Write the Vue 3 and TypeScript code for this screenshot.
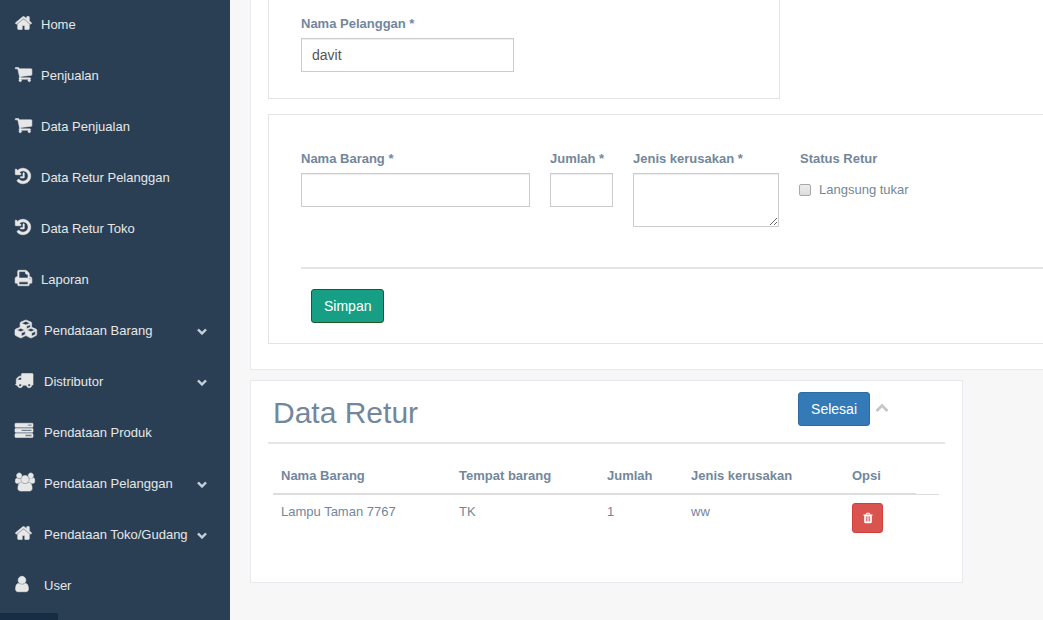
<script setup lang="ts">
import { ref } from 'vue'

interface Icon {
  box: string
  width: number
  path: string
  flip?: boolean
}

interface MenuItem {
  label: string
  icon: string
  spaced?: boolean
  expandable?: boolean
}

interface ReturnRow {
  name: string
  place: string
  amount: number
  damage: string
}

const icons: Record<string, Icon> = {
  home: {
    box: '64 0 1664 1792',
    width: 17,
    path: 'M1472 992v480q0 26-19 45t-45 19h-384v-384h-256v384h-384q-26 0-45-19t-19-45v-480q0-1 .5-3t.5-3l575-474 575 474q1 2 1 6zm223-69l-62 74q-8 9-21 11h-3q-13 0-21-7l-692-577-692 577q-12 8-24 7-13-2-21-11l-62-74q-8-10-7-23.5t11-21.5l719-599q32-26 76-26t76 26l244 204v-195q0-14 9-23t23-9h192q14 0 23 9t9 23v408l219 182q10 8 11 21.5t-7 23.5z',
  },
  cart: {
    box: '64 0 1664 1792',
    width: 17,
    path: 'M704 1536q0 52-38 90t-90 38-90-38-38-90 38-90 90-38 90 38 38 90zm896 0q0 52-38 90t-90 38-90-38-38-90 38-90 90-38 90 38 38 90zm128-1088v512q0 24-16.5 42.5t-40.5 21.5l-1044 122q13 60 13 70 0 16-24 64h920q26 0 45 19t19 45-19 45-45 19h-1024q-26 0-45-19t-19-45q0-11 8-31.5t16-36 21.5-40 15.5-29.5l-177-823h-204q-26 0-45-19t-19-45 19-45 45-19h256q16 0 28.5 6.5t19.5 15.5 13 24.5 8 26 5.5 29.5 4.5 26h1201q26 0 45 19t19 45z',
  },
  history: {
    box: '128 0 1536 1792',
    width: 16,
    path: 'M1664 896q0 156-61 298t-164 245-245 164-298 61q-172 0-327-72.5t-264-204.5q-7-10-6.5-22.5t8.5-20.5l137-138q10-9 25-9 16 2 23 12 73 95 179 147t225 52q104 0 198.5-40.5t163.5-109.5 109.5-163.5 40.5-198.5-40.5-198.5-109.5-163.5-163.5-109.5-198.5-40.5q-98 0-188 35.5t-160 101.5l137 138q31 30 14 69-17 40-59 40h-448q-26 0-45-19t-19-45v-448q0-42 40-59 39-17 69 14l130 129q107-101 244.5-156.5t284.5-55.5q156 0 298 61t245 164 164 245 61 298zm-640-288v448q0 14-9 23t-23 9h-320q-14 0-23-9t-9-23v-64q0-14 9-23t23-9h224v-352q0-14 9-23t23-9h64q14 0 23 9t9 23z',
  },
  print: {
    box: '64 0 1664 1792',
    width: 17,
    path: 'M448 1536h896v-256h-896v256zm0-640h896v-384h-160q-40 0-68-28t-28-68v-160h-640v640zm1152 64q0-26-19-45t-45-19-45 19-19 45 19 45 45 19 45-19 19-45zm128 0v416q0 13-9.5 22.5t-22.5 9.5h-224v160q0 40-28 68t-68 28h-960q-40 0-68-28t-28-68v-160h-224q-13 0-22.5-9.5t-9.5-22.5v-416q0-79 56.5-135.5t135.5-56.5h64v-544q0-40 28-68t68-28h672q40 0 88 20t76 48l152 152q28 28 48 76t20 88v256h64q79 0 135.5 56.5t56.5 135.5z',
  },
  cubes: {
    box: '0 0 2304 1792',
    width: 23,
    flip: true,
    path: 'M640 -96l384 192v314l-384 -164v-342zM576 358l404 173l-404 173l-404 -173zM1664 -96l384 192v314l-384 -164v-342zM1600 358l404 173l-404 173l-404 -173zM1152 651l384 165v266l-384 -164v-267zM1088 1030l441 189l-441 189l-441 -189zM2176 512v-416q0 -36 -19 -67t-52 -47l-448 -224q-25 -14 -57 -14t-57 14l-448 224q-4 2 -7 4q-2 -2 -7 -4l-448 -224q-25 -14 -57 -14t-57 14l-448 224q-33 16 -52 47t-19 67v416q0 38 21.5 70t56.5 48l434 186v400q0 38 21.5 70t56.5 48l448 192q23 10 50 10t50 -10l448 -192q35 -16 56.5 -48t21.5 -70v-400l434 -186q36 -16 57 -48t21 -70z',
  },
  truck: {
    box: '0 0 1792 1792',
    width: 18,
    path: 'M640 1408q0-52-38-90t-90-38-90 38-38 90 38 90 90 38 90-38 38-90zm-384-512h384v-256h-158q-13 0-22 9l-195 195q-9 9-9 22v30zm1280 512q0-52-38-90t-90-38-90 38-38 90 38 90 90 38 90-38 38-90zm256-1088v1024q0 15-4 26.5t-13.5 18.5-16.5 11.5-23.5 6-22.5 2-25.5 0-22.5-.5q0 106-75 181t-181 75-181-75-75-181h-384q0 106-75 181t-181 75-181-75-75-181h-64q-3 0-22.5.5t-25.5 0-22.5-2-23.5-6-16.5-11.5-13.5-18.5-4-26.5q0-26 19-45t45-19v-320q0-8-.5-35t0-38 2.5-34.5 6.5-37 14-30.5 22.5-30l198-198q19-19 50.5-32t58.5-13h160v-192q0-26 19-45t45-19h1024q26 0 45 19t19 45z',
  },
  tasks: {
    box: '0 0 1792 1792',
    width: 18,
    path: 'M1024 1408h640v-128h-640v128zm-384-512h1024v-128h-1024v128zm640-512h384v-128h-384v128zm512 832v256q0 26-19 45t-45 19h-1664q-26 0-45-19t-19-45v-256q0-26 19-45t45-19h1664q26 0 45 19t19 45zm0-512v256q0 26-19 45t-45 19h-1664q-26 0-45-19t-19-45v-256q0-26 19-45t45-19h1664q26 0 45 19t19 45zm0-512v256q0 26-19 45t-45 19h-1664q-26 0-45-19t-19-45v-256q0-26 19-45t45-19h1664q26 0 45 19t19 45z',
  },
  users: {
    box: '0 0 1920 1792',
    width: 20,
    flip: true,
    path: 'M593 640q-162 -5 -265 -128h-134q-82 0 -138 40.5t-56 118.5q0 353 124 353q6 0 43.5 -21t97.5 -42.5t119 -21.5q67 0 133 23q-5 -37 -5 -66q0 -159 93 -293zM1664 3q0 -120 -73 -189.5t-194 -69.5h-874q-121 0 -194 69.5t-73 189.5q0 53 3.5 103.5t14 109t26.5 108.5t43 97.5t62 81t85.5 53.5t111.5 20q10 0 43 -21.5t73 -48t107 -48t135 -21.5t135 21.5t107 48t73 48t43 21.5q61 0 111.5 -20t85.5 -53.5t62 -81t43 -97.5t26.5 -108.5t14 -109t3.5 -103.5zM640 1280q0 -106 -75 -181t-181 -75t-181 75t-75 181t75 181t181 75t181 -75t75 -181zM1344 896q0 -159 -112.5 -271.5t-271.5 -112.5t-271.5 112.5t-112.5 271.5t112.5 271.5t271.5 112.5t271.5 -112.5t112.5 -271.5zM1920 671q0 -78 -56 -118.5t-138 -40.5h-134q-103 123 -265 128q93 134 93 293q0 29 -5 66q66 -23 133 -23q59 0 119 21.5t97.5 42.5t43.5 21q124 0 124 -353zM1792 1280q0 -106 -75 -181t-181 -75t-181 75t-75 181t75 181t181 75t181 -75t75 -181z',
  },
  user: {
    box: '256 0 1280 1792',
    width: 14,
    path: 'M1536 1399q0 109-62.5 187t-150.5 78h-854q-88 0-150.5-78t-62.5-187q0-85 8.5-160.5t31.5-152 58.5-131 94-89 134.5-34.5q131 128 313 128t313-128q76 0 134.5 34.5t94 89 58.5 131 31.5 152 8.5 160.5zm-256-887q0 159-112.5 271.5t-271.5 112.5-271.5-112.5-112.5-271.5 112.5-271.5 271.5-112.5 271.5 112.5 112.5 271.5z',
  },
}

const menu: MenuItem[] = [
  { label: 'Home', icon: 'home' },
  { label: 'Penjualan', icon: 'cart' },
  { label: 'Data Penjualan', icon: 'cart' },
  { label: 'Data Retur Pelanggan', icon: 'history' },
  { label: 'Data Retur Toko', icon: 'history' },
  { label: 'Laporan', icon: 'print' },
  { label: 'Pendataan Barang', icon: 'cubes', spaced: true, expandable: true },
  { label: 'Distributor', icon: 'truck', spaced: true, expandable: true },
  { label: 'Pendataan Produk', icon: 'tasks', spaced: true },
  { label: 'Pendataan Pelanggan', icon: 'users', spaced: true, expandable: true },
  { label: 'Pendataan Toko/Gudang', icon: 'home', spaced: true, expandable: true },
  { label: 'User', icon: 'user', spaced: true },
]

const customer = ref('davit')
const item = ref('')
const amount = ref('')
const damage = ref('')
const swapNow = ref(false)
const rows = ref<ReturnRow[]>([{ name: 'Lampu Taman 7767', place: 'TK', amount: 1, damage: 'ww' }])

function removeRow(index: number) {
  rows.value.splice(index, 1)
}
</script>

<template>
  <div class="layout">
    <aside class="sidebar">
      <nav class="menu">
        <a v-for="entry in menu" :key="entry.label" href="#" class="menu-item" :class="{ spaced: entry.spaced }">
          <span class="menu-icon">
            <svg :viewBox="icons[entry.icon].box" :width="icons[entry.icon].width" height="18" aria-hidden="true">
              <path :d="icons[entry.icon].path" :transform="icons[entry.icon].flip ? 'matrix(1 0 0 -1 0 1536)' : undefined" />
            </svg>
          </span>
          <span class="menu-label">{{ entry.label }}</span>
          <svg v-if="entry.expandable" class="menu-arrow" viewBox="0 0 1792 1792" aria-hidden="true">
            <path d="M1683 808l-742 741q-19 19-45 19t-45-19l-742-741q-19-19-19-45.5t19-45.5l166-165q19-19 45-19t45 19l531 531 531-531q19-19 45-19t45 19l166 165q19 19 19 45.5t-19 45.5z" />
          </svg>
        </a>
      </nav>
      <div class="sidebar-footer"></div>
    </aside>

    <main class="content">
      <section class="panel form-panel">
        <div class="box customer-box">
          <div class="field customer-field">
            <label for="customer">Nama Pelanggan *</label>
            <input id="customer" v-model="customer" type="text" class="control" />
          </div>
        </div>

        <form class="box item-box" @submit.prevent>
          <div class="fields">
            <div class="field item-field">
              <label for="item">Nama Barang *</label>
              <input id="item" v-model="item" type="text" class="control" />
            </div>
            <div class="field amount-field">
              <label for="amount">Jumlah *</label>
              <input id="amount" v-model="amount" type="text" class="control" />
            </div>
            <div class="field damage-field">
              <label for="damage">Jenis kerusakan *</label>
              <textarea id="damage" v-model="damage" class="control area"></textarea>
            </div>
            <fieldset class="field status-field">
              <legend>Status Retur</legend>
              <label class="check" for="swap">
                <input id="swap" v-model="swapNow" type="checkbox" />
                Langsung tukar
              </label>
            </fieldset>
          </div>
          <hr class="rule" />
          <button type="submit" class="btn btn-save">Simpan</button>
        </form>
      </section>

      <section class="panel list-panel">
        <header class="list-head">
          <h2>Data Retur</h2>
          <button type="button" class="btn btn-done">Selesai</button>
          <button type="button" class="collapse" aria-label="Ciutkan">
            <svg viewBox="0 0 1792 1792" width="14" height="14" aria-hidden="true">
              <path d="M1683 1331l-166 165q-19 19-45 19t-45-19l-531-531-531 531q-19 19-45 19t-45-19l-166-165q-19-19-19-45.5t19-45.5l742-741q19-19 45-19t45 19l742 741q19 19 19 45.5t-19 45.5z" />
            </svg>
          </button>
        </header>
        <table>
          <colgroup>
            <col class="col-name" />
            <col class="col-place" />
            <col class="col-amount" />
            <col class="col-damage" />
            <col class="col-action" />
            <col />
          </colgroup>
          <thead>
            <tr>
              <th scope="col">Nama Barang</th>
              <th scope="col">Tempat barang</th>
              <th scope="col">Jumlah</th>
              <th scope="col">Jenis kerusakan</th>
              <th scope="col">Opsi</th>
            </tr>
          </thead>
          <tbody>
            <tr v-for="(row, index) in rows" :key="row.name">
              <td>{{ row.name }}</td>
              <td>{{ row.place }}</td>
              <td>{{ row.amount }}</td>
              <td>{{ row.damage }}</td>
              <td>
                <button type="button" class="btn-delete" aria-label="Hapus" @click="removeRow(index)">
                  <svg viewBox="0 0 1792 1792" width="12" height="12" aria-hidden="true">
                    <path d="M704 1376v-704q0-14-9-23t-23-9h-64q-14 0-23 9t-9 23v704q0 14 9 23t23 9h64q14 0 23-9t9-23zm256 0v-704q0-14-9-23t-23-9h-64q-14 0-23 9t-9 23v704q0 14 9 23t23 9h64q14 0 23-9t9-23zm256 0v-704q0-14-9-23t-23-9h-64q-14 0-23 9t-9 23v704q0 14 9 23t23 9h64q14 0 23-9t9-23zm-544-992h448l-48-117q-7-9-17-11h-317q-10 2-17 11zm928 32v64q0 14-9 23t-23 9h-96v948q0 83-47 143.5t-113 60.5h-832q-66 0-113-58.5t-47-141.5v-952h-96q-14 0-23-9t-9-23v-64q0-14 9-23t23-9h309l70-167q15-37 54-63t79-26h320q40 0 79 26t54 63l70 167h309q14 0 23 9t9 23z" />
                  </svg>
                </button>
              </td>
              <td></td>
            </tr>
          </tbody>
        </table>
      </section>
    </main>
  </div>
</template>

<style>
body {
  margin: 0;
  background: #f7f7f7;
}
</style>

<style scoped>
.layout,
.layout * {
  box-sizing: border-box;
}

.layout {
  display: flex;
  min-height: 100vh;
  font-family: "Liberation Sans", Arial, sans-serif;
  font-size: 13px;
  line-height: 18px;
  color: #73879c;
}

.sidebar {
  flex: 0 0 230px;
  display: flex;
  flex-direction: column;
  background: #2a3f54;
}

.menu {
  display: flex;
  flex-direction: column;
  gap: 27px;
  padding: 13px 23px 0 15px;
}

.menu-item {
  display: flex;
  align-items: center;
  height: 24px;
  color: #e7e7e7;
  text-decoration: none;
  white-space: nowrap;
}

.menu-icon {
  flex: 0 0 26px;
  display: flex;
  padding-bottom: 4px;
}

.spaced .menu-icon {
  flex-basis: 29px;
}

.menu-icon svg {
  overflow: visible;
  fill: #e7e7e7;
  stroke: #e7e7e7;
  stroke-width: 60;
}

.menu-label {
  flex: 1;
}

.menu-arrow {
  width: 10px;
  height: 10px;
  overflow: visible;
  fill: #c4cfda;
  stroke: #c4cfda;
  stroke-width: 80;
}

.sidebar-footer {
  width: 25%;
  height: 7px;
  margin-top: auto;
  background: #172d44;
}

.content {
  flex: 1;
  min-width: 0;
  padding-left: 20px;
}

.panel {
  background: #fff;
  border: 1px solid #e6e9ed;
}

.form-panel {
  border-width: 0 0 1px 1px;
  padding: 0 0 25px 17px;
}

.box {
  border: 1px solid #e4e4e4;
  padding-left: 32px;
}

.customer-box {
  width: 512px;
  border-top: 0;
  padding-top: 15px;
  padding-bottom: 26px;
}

.item-box {
  margin-top: 15px;
  border-right: 0;
  padding-top: 35px;
  padding-bottom: 20px;
}

.fields {
  display: flex;
  align-items: flex-start;
  gap: 20px;
}

.field {
  display: flex;
  flex-direction: column;
  gap: 5px;
}

.field > label,
legend {
  font-weight: bold;
  white-space: nowrap;
}

.customer-field {
  width: 213px;
}

.item-field {
  width: 229px;
}

.amount-field {
  width: 63px;
}

.damage-field {
  width: 146px;
}

.status-field {
  display: block;
  margin: 0;
  border: 0;
  padding: 0;
}

legend {
  padding: 0 1px;
}

.field > .check {
  display: flex;
  align-items: center;
  gap: 8px;
  margin-top: 13px;
  font-weight: normal;
}

.check input {
  appearance: none;
  width: 12px;
  height: 12px;
  margin: 0;
  border: 1px solid #a8a8a8;
  border-radius: 2px;
  background: linear-gradient(#ededed, #dcdcdc);
}

.check input:checked {
  background: #73879c;
}

.control {
  display: block;
  width: 100%;
  height: 34px;
  margin: 0;
  border: 1px solid #ccc;
  border-radius: 0;
  padding: 6px 10px;
  background: #fff;
  box-shadow: inset 0 1px 1px rgba(0, 0, 0, 0.075);
  color: #555;
  font: inherit;
  font-size: 14px;
}

.area {
  height: 54px;
}

.rule {
  height: 2px;
  margin: 40px 0 20px;
  border: 0;
  background: #e5e5e5;
}

.btn {
  height: 34px;
  border: 1px solid;
  border-radius: 3px;
  padding: 0 12px;
  color: #fff;
  font: inherit;
  font-size: 14px;
}

.btn-save {
  margin-left: 10px;
  background: #169f85;
  border-color: #255625;
}

.btn-done {
  background: #337ab7;
  border-color: #2e6da4;
}

.list-panel {
  margin: 10px 80px 0 0;
  padding: 10px 17px 42px;
}

.list-head {
  display: flex;
  align-items: flex-start;
  height: 53px;
  border-bottom: 2px solid #e6e6e8;
  padding: 1px 56px 0 5px;
}

h2 {
  flex: 1;
  margin: 0;
  font-size: 30px;
  font-weight: normal;
  line-height: 42px;
}

.collapse {
  display: flex;
  margin: 0 0 0 5px;
  border: 0;
  padding: 8px 0;
  background: none;
}

.collapse svg {
  fill: #c5c7cb;
}

table {
  width: calc(100% - 11px);
  margin: 15px 6px 0 5px;
  border-collapse: collapse;
  table-layout: fixed;
}

.col-name {
  width: 178px;
}

.col-place {
  width: 148px;
}

.col-amount {
  width: 84px;
}

.col-damage {
  width: 161px;
}

.col-action {
  width: 72px;
}

th {
  border-bottom: 2px solid #ddd;
  padding: 8px;
  text-align: left;
}

td {
  border-top: 1px solid #ddd;
  padding: 8px 8px 7px;
  vertical-align: top;
}

.btn-delete {
  display: flex;
  align-items: center;
  justify-content: center;
  width: 31px;
  height: 30px;
  border: 1px solid #d43f3a;
  border-radius: 3px;
  padding: 0;
  background: #d9534f;
}

.btn-delete svg {
  fill: #fff;
}
</style>
